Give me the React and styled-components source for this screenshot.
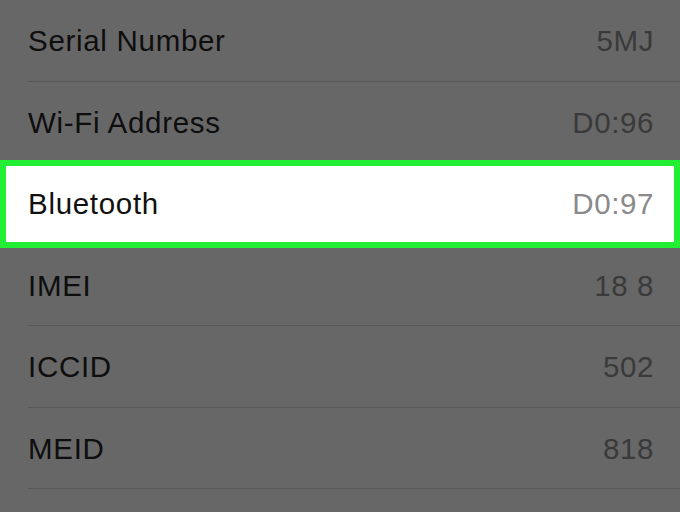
import styled, { createGlobalStyle } from 'styled-components';

const GlobalStyle = createGlobalStyle`
  html, body {
    margin: 0;
    padding: 0;
    background: #676767;
  }
  body {
    font-family: "Liberation Sans", Arial, sans-serif;
    -webkit-font-smoothing: antialiased;
  }
`;

const Page = styled.div`
  width: 680px;
  height: 512px;
  overflow: hidden;
  background: #676767;
`;

const List = styled.div`
  display: flex;
  flex-direction: column;
  padding-left: 28px;
  border-top: 1px solid #5a5a5a;
  margin-top: -1px;
`;

const Row = styled.div`
  height: 81.7px;
  box-sizing: border-box;
  display: flex;
  align-items: center;
  justify-content: space-between;
  padding-right: 26px;
  border-bottom: 1px solid #575757;
  padding-top: 2px;
`;

const Highlight = styled.div`
  height: 88px;
  box-sizing: border-box;
  margin: -3px 0 -4px -28px;
  padding: 0 20px 0 22px;
  display: flex;
  align-items: center;
  justify-content: space-between;
  background: #ffffff;
  border: 6px solid #22ee33;
  position: relative;
`;

const Label = styled.span`
  font-size: 29.5px;
  color: ${({ $active }) => ($active ? '#111111' : '#0e0e0e')};
  letter-spacing: 0.7px;
`;

const Value = styled.span`
  font-size: 29.5px;
  letter-spacing: 0.6px;
  color: ${({ $active }) => ($active ? '#8a8a8a' : '#3a3a3a')};
`;

const rows = [
  { label: 'Serial Number', value: '5MJ' },
  { label: 'Wi-Fi Address', value: 'D0:96' },
  { label: 'Bluetooth', value: 'D0:97', active: true },
  { label: 'IMEI', value: '18 8' },
  { label: 'ICCID', value: '502' },
  { label: 'MEID', value: '818' },
  { label: '', value: '' },
];

export default function App() {
  return (
    <Page>
      <GlobalStyle />
      <List>
        {rows.map((r, i) =>
          r.active ? (
            <Highlight key={i}>
              <Label $active>{r.label}</Label>
              <Value $active>{r.value}</Value>
            </Highlight>
          ) : (
            <Row key={i}>
              <Label>{r.label}</Label>
              <Value>{r.value}</Value>
            </Row>
          )
        )}
      </List>
    </Page>
  );
}
